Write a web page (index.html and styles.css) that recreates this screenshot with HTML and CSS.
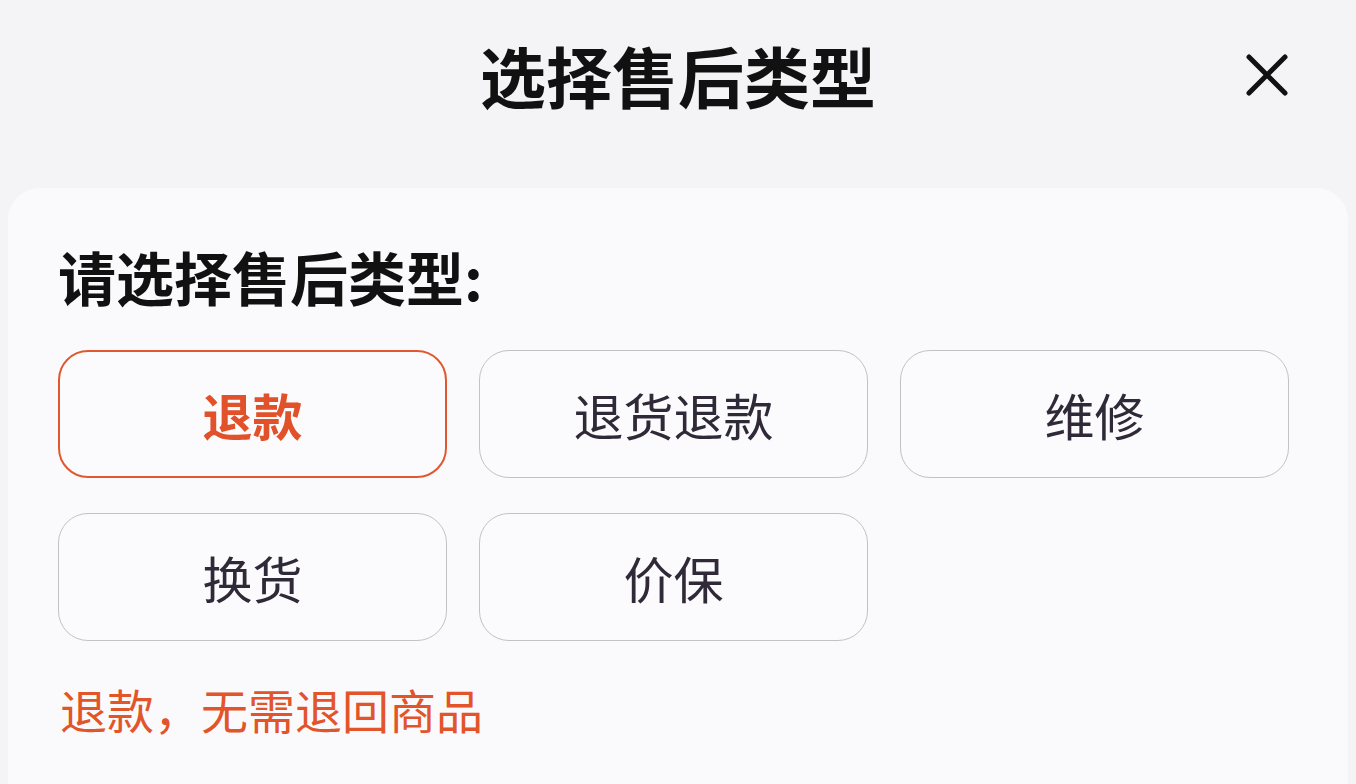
FILE: index.html
```html
<!DOCTYPE html>
<html lang="zh-CN">
<head>
<meta charset="utf-8">
<title>选择售后类型</title>
<link rel="stylesheet" href="styles.css">
</head>
<body>
<div class="sheet">
  <header class="header">
    <span class="spacer"></span>
    <h1 class="title">选择售后类型</h1>
    <button class="close" aria-label="关闭">
      <svg viewBox="0 0 44 44" width="44" height="44">
        <path d="M4 4 L40 40 M40 4 L4 40" stroke="#111" stroke-width="5" stroke-linecap="round" fill="none"/>
      </svg>
    </button>
  </header>
  <section class="card">
    <h2 class="label">请选择售后类型:</h2>
    <div class="options">
      <button class="opt opt-active">退款</button>
      <button class="opt">退货退款</button>
      <button class="opt">维修</button>
      <button class="opt">换货</button>
      <button class="opt">价保</button>
    </div>
    <p class="hint">退款，无需退回商品</p>
  </section>
</div>
</body>
</html>
```
FILE: styles.css
```css
html, body {
  margin: 0;
  padding: 0;
  height: 100%;
}
body {
  background: #f4f4f6;
  font-family: "Noto Sans CJK SC", "Noto Sans", sans-serif;
  overflow: hidden;
}
.sheet {
  display: flex;
  flex-direction: column;
  height: 100%;
}
.header {
  height: 188px;
  box-sizing: border-box;
  padding-top: 41px;
  display: grid;
  grid-template-columns: 1fr auto 1fr;
  align-items: start;
}
.title {
  margin: 0;
  font-size: 66px;
  line-height: 66px;
  font-weight: 700;
  color: #111;
}
.close {
  justify-self: end;
  margin-right: 67px;
  margin-top: 12px;
  width: 44px;
  height: 44px;
  padding: 0;
  border: 0;
  background: transparent;
  display: flex;
}
.card {
  flex: 1;
  margin: 0 8px;
  background: #fafafc;
  border-radius: 32px 32px 0 0;
  padding: 60px 0 0 50px;
}
.label {
  margin: 0;
  font-size: 58px;
  line-height: 57px;
  font-weight: 700;
  color: #111;
}
.options {
  margin-top: 45px;
  display: grid;
  grid-template-columns: repeat(3, 389px);
  grid-auto-rows: 128px;
  column-gap: 32px;
  row-gap: 35px;
}
.opt {
  box-sizing: border-box;
  border: 1.5px solid #c2c1c8;
  border-radius: 30px;
  background: #fbfbfd;
  font-family: inherit;
  font-size: 50px;
  font-weight: 400;
  color: #302a38;
  padding: 0;
}
.opt-active {
  border: 2px solid #e0582e;
  color: #e2522a;
  font-weight: 700;
}
.hint {
  margin: 44px 0 0 2px;
  font-size: 47px;
  line-height: 47px;
  color: #e2542a;
}
```
